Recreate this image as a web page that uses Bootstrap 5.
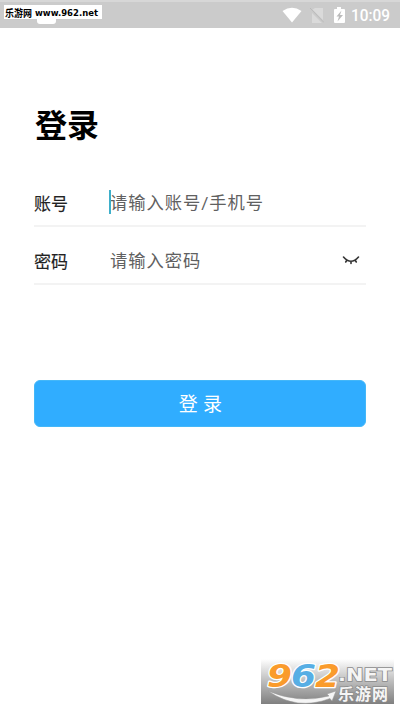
<!DOCTYPE html>
<html lang="zh-CN">
<head>
<meta charset="utf-8">
<meta name="viewport" content="width=device-width, initial-scale=1">
<title>登录</title>
<link href="https://cdn.jsdelivr.net/npm/bootstrap@5.3.0/dist/css/bootstrap.min.css" rel="stylesheet">
<style>
body{font-family:Roboto,"Noto Sans CJK SC",sans-serif;height:710px;overflow:hidden}
.status-bar{height:28px;background:#cbcbcb;border-top:2px solid #d7d7d7;padding-right:7px}
.clock{width:42px}
.site-tag{left:4px;top:5px;width:98px;height:14px;background:#fff}
.tab-chip{left:37px;top:10px;width:19px;height:14px;background:#fff;border-radius:3px}
.screen{padding:74px 34px 0}
.title{font-size:32px;line-height:48px;font-weight:700;color:#000;padding-left:1px}
.login-form{padding-top:19px}
.field-row{height:58px;border-bottom:2px solid #f3f3f3;padding-top:12px}
.field-label{width:76px;font-size:17px;line-height:24px;padding-top:1px;color:#222;-webkit-text-stroke:.15px #222}
.field-input{font-size:17.3px;letter-spacing:.95px;height:26px;line-height:26px;color:#555;caret-color:transparent}
.field-input::placeholder{color:#606060;opacity:1}
.caret-line{left:-1px;top:0;width:2px;height:24px;background:#3eafca}
.login-btn{margin-top:95px;height:47px;background:#30adff;color:#fff;font-size:19px;border-radius:6px;border:1px solid #44b7f8;letter-spacing:.3px}
.login-btn span{display:block;padding:4px 0 0 1px}
.brand{left:261px;top:659px}
</style>
</head>
<body class="bg-white position-relative">
<header class="status-bar d-flex align-items-center justify-content-end text-white">
  <svg width="20" height="16" viewBox="0 0 20 16"><path d="M.5 4Q10-2.700 19.500 4L10 15.500Z" fill="#fff"/></svg>
  <svg class="ms-2" width="14" height="17" viewBox="0 0 14 17"><path d="M2 3L5 1H13V16H2Z" fill="#dadada"/><path d="M0 2L14 16" stroke="#cbcbcb" stroke-width="3"/><path d="M0 1L14 15.500" stroke="#bababa" stroke-width="1"/></svg>
  <svg class="ms-2" width="15" height="17" viewBox="0 0 15 17"><path d="M5 2V0H9V2H12Q13 2 13 3V15Q13 16 12 16H3Q2 16 2 15V3Q2 2 3 2Z" fill="#fff"/><path d="M9.500 3.500L4.500 9.500H7L5.500 14.500L11 8H8Z" fill="#bbb"/></svg>
  <svg class="clock ms-1 overflow-visible" height="26"><text x="0" y="18.500" fill="#fff" font-size="17" font-weight="500" textLength="39" lengthAdjust="spacingAndGlyphs">10:09</text></svg>
</header>
<div class="tab-chip position-absolute"></div>
<div class="site-tag position-absolute"><svg class="d-block overflow-visible" width="98" height="14"><g fill="#000" font-weight="700"><text x="1" y="11.500" font-size="10" textLength="27" lengthAdjust="spacingAndGlyphs">乐游网</text><text x="31" y="11" font-family="DejaVu Sans" font-size="9.500" textLength="63" lengthAdjust="spacingAndGlyphs">www.962.net</text></g></svg></div>

<main class="screen">
  <h1 class="title m-0">登录</h1>
  <form class="login-form">
    <div class="field-row d-flex align-items-center">
      <label class="field-label" for="account">账号</label>
      <div class="position-relative flex-grow-1">
        <input id="account" class="field-input form-control-plaintext p-0" type="text" placeholder="请输入账号/手机号">
        <span class="caret-line position-absolute"></span>
      </div>
    </div>
    <div class="field-row d-flex align-items-center">
      <label class="field-label" for="password">密码</label>
      <div class="d-flex align-items-center flex-grow-1">
        <input id="password" class="field-input form-control-plaintext p-0" type="password" placeholder="请输入密码">
        <svg class="flex-shrink-0 me-1" width="22" height="18" viewBox="0 0 22 18" fill="none" stroke="#333" stroke-width="1.600" stroke-linecap="round"><path d="M3.500 5Q11 13.500 18.500 5M6.700 8.500L5.700 10M11 9.500V11.500M15.300 8.500L16.300 10"/></svg>
      </div>
    </div>
    <button class="login-btn btn w-100 p-0" type="button"><span>登 录</span></button>
  </form>
</main>

<svg class="brand position-absolute overflow-visible" width="134" height="45" viewBox="0 0 134 45">
  <defs>
    <linearGradient id="shade" x1="0" y1="0" x2="0" y2="1"><stop offset="0" stop-color="#fff"/><stop offset=".5" stop-color="#bcbcbc"/><stop offset="1" stop-color="#808080"/></linearGradient>
  </defs>
  <rect width="133" height="45" fill="url(#shade)"/>
  <g font-family="DejaVu Sans" font-weight="700" font-style="italic" font-size="32" stroke="#fff" stroke-width="2.500" paint-order="stroke" stroke-linejoin="round">
    <text x="6" y="28" fill="#fa9b2c" textLength="25" lengthAdjust="spacingAndGlyphs">9</text>
    <text x="30" y="28" fill="#57aee4" textLength="25" lengthAdjust="spacingAndGlyphs">6</text>
    <text x="54" y="28" fill="#fa9b2c" textLength="25" lengthAdjust="spacingAndGlyphs">2</text>
  </g>
  <path d="M7 32Q38 45 68 37L66 35L75 32L71 42L69 39.500Q36 52 7 32Z" fill="#f5f5f5" stroke="#999" stroke-width=".5"/>
  <g font-weight="700" fill="#f5f5f5" stroke="#8b8b8b" stroke-width="1.500" paint-order="stroke">
    <text x="77" y="22" font-family="DejaVu Sans" font-size="18" textLength="54" lengthAdjust="spacingAndGlyphs">.NET</text>
    <text x="77" y="41" font-size="16" textLength="50">乐游网</text>
  </g>
</svg>
<script src="https://cdn.jsdelivr.net/npm/bootstrap@5.3.0/dist/js/bootstrap.bundle.min.js"></script>
</body>
</html>
